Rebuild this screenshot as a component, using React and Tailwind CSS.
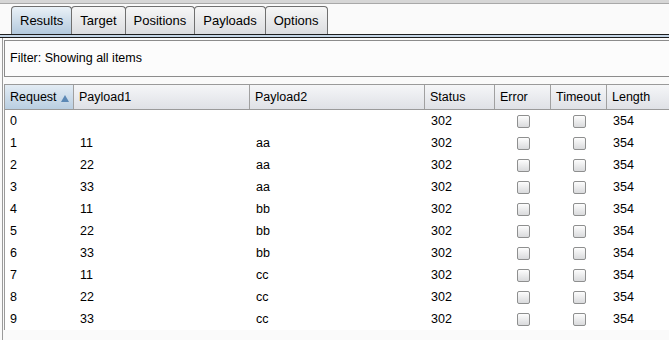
import React from 'react';

const tabs = ['Results', 'Target', 'Positions', 'Payloads', 'Options'];

const cols = [
  { key: 'req', label: 'Request', w: 'w-[69px]', sorted: true },
  { key: 'p1', label: 'Payload1', w: 'w-[176px]' },
  { key: 'p2', label: 'Payload2', w: 'w-[175px]' },
  { key: 'status', label: 'Status', w: 'w-[70px]' },
  { key: 'err', label: 'Error', w: 'w-[56px]', check: true },
  { key: 'to', label: 'Timeout', w: 'w-[56px]', check: true },
  { key: 'len', label: 'Length', w: 'flex-1' },
];

const rows = [
  ['0', '', ''],
  ['1', '11', 'aa'],
  ['2', '22', 'aa'],
  ['3', '33', 'aa'],
  ['4', '11', 'bb'],
  ['5', '22', 'bb'],
  ['6', '33', 'bb'],
  ['7', '11', 'cc'],
  ['8', '22', 'cc'],
  ['9', '33', 'cc'],
];

function Checkbox() {
  return (
    <div className="w-[13px] h-[13px] rounded-[2px] border border-[#8e8f8f] bg-gradient-to-b from-[#fdfdfd] to-[#d9dadc]" />
  );
}

export default function App() {
  return (
    <div className="w-[669px] h-[340px] overflow-hidden bg-[#fafafa] font-['Liberation_Sans',Arial,sans-serif] text-[12.5px] text-black flex flex-col">
      {/* top strip */}
      <div className="h-[4px] bg-[#d6d6d6] border-b border-[#a8a8a8]" />

      {/* tabs */}
      <div className="flex pl-[11px] pt-[2px] h-[30px] items-end">
        {tabs.map((t, i) => (
          <div
            key={t}
            className={
              'h-[28px] flex items-center px-[8px] text-[13px] border border-b-0 border-[#6f6f6f] rounded-t-[4px] -ml-px first:ml-0 ' +
              (i === 0
                ? 'bg-gradient-to-b from-[#eaf1f7] to-[#b3c9dd]'
                : 'bg-gradient-to-b from-[#f6f6f6] to-[#dcdde0]')
            }
          >
            {t}
          </div>
        ))}
      </div>
      <div className="h-[4px] border-t border-b border-[#1e1e1e] bg-[#c5d6e7]" />

      <div className="flex-1 border-l border-[#9a9a9a] ml-[2px] pl-[1px] flex flex-col">
        {/* filter */}
        <div className="mt-[2px] h-[37px] border border-r-0 border-[#8c8c8c] bg-[#fcfcfc] flex items-center pl-[5px]">
          Filter: Showing all items
        </div>

        {/* table */}
        <div className="mt-[7px] border-l border-[#9a9a9a] flex flex-col">
          <div className="flex h-[26px] border-t border-b border-[#9a9a9a]">
            {cols.map((c) => (
              <div
                key={c.key}
                className={
                  c.w +
                  ' flex items-center pl-[5px] border-r border-[#a0a0a0] last:border-r-0 ' +
                  (c.sorted
                    ? 'bg-gradient-to-b from-[#e3ecf4] to-[#b9cee1]'
                    : 'bg-gradient-to-b from-[#f5f6f8] to-[#dfe1e6]')
                }
              >
                {c.label}
                {c.sorted && (
                  <svg width="8" height="7" viewBox="0 0 8 7" className="ml-[4px] mt-[2px]">
                    <path d="M4 0 L8 7 L0 7 Z" fill="#5b88b5" />
                  </svg>
                )}
              </div>
            ))}
          </div>
          {rows.map((r) => (
            <div key={r[0]} className="flex h-[22px] bg-white items-center">
              <div className="w-[69px] pl-[5px]">{r[0]}</div>
              <div className="w-[176px] pl-[6px]">{r[1]}</div>
              <div className="w-[175px] pl-[6px]">{r[2]}</div>
              <div className="w-[70px] pl-[6px]">302</div>
              <div className="w-[56px] flex justify-center"><Checkbox /></div>
              <div className="w-[56px] flex justify-center"><Checkbox /></div>
              <div className="flex-1 pl-[6px]">354</div>
            </div>
          ))}
        </div>
      </div>
    </div>
  );
}
